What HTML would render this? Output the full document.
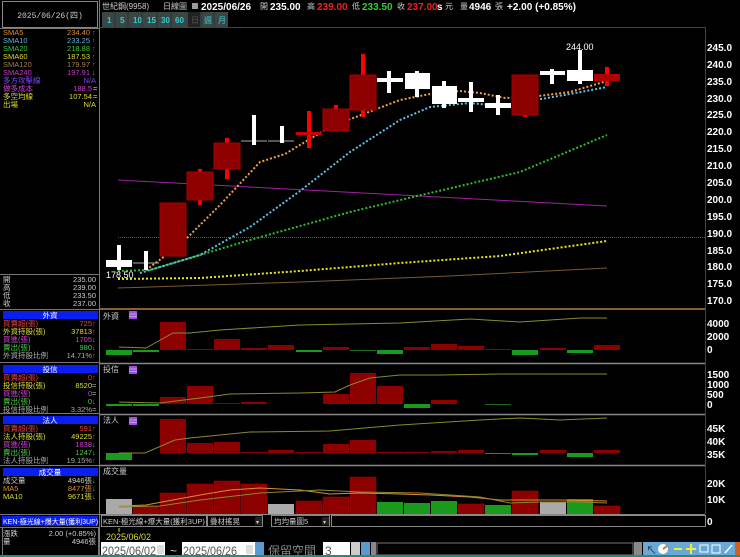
<!DOCTYPE html>
<html><head><meta charset="utf-8"><style>
html,body{margin:0;padding:0;background:#000;width:740px;height:557px;overflow:hidden}
svg{display:block}
text{font-family:"Liberation Sans","Noto Sans CJK TC",sans-serif}
.s{font-size:7.5px}
.m{font-family:"Liberation Mono","Noto Sans CJK TC",monospace}
.ax{font-size:10px;fill:#fff;font-weight:bold}
</style></head><body>
<svg width="740" height="557" viewBox="0 0 740 557" xmlns="http://www.w3.org/2000/svg">
<rect width="740" height="557" fill="#000"/>
<!-- LEFT PANEL -->
<rect x="2.5" y="1.5" width="95" height="26" fill="#000" stroke="#888"/>
<text x="50" y="18" fill="#ccc" font-size="8" text-anchor="middle" class="m">2025/06/26(四)</text>
<line x1="99.5" y1="0" x2="99.5" y2="557" stroke="#777"/>
<line x1="0" y1="28.5" x2="99" y2="28.5" stroke="#777"/>
<g class="s m" font-size="7.5">
<text x="3" y="35" fill="#e08a30">SMA5</text><text x="90" y="35" fill="#e08a30" text-anchor="end">234.40</text><text x="92" y="35" fill="#f22">↑</text>
<text x="3" y="43" fill="#5fb4d8">SMA10</text><text x="90" y="43" fill="#5fb4d8" text-anchor="end">233.25</text><text x="92" y="43" fill="#f22">↑</text>
<text x="3" y="51" fill="#3c3">SMA20</text><text x="90" y="51" fill="#3c3" text-anchor="end">218.88</text><text x="92" y="51" fill="#f22">↑</text>
<text x="3" y="59" fill="#dd3">SMA60</text><text x="90" y="59" fill="#dd3" text-anchor="end">187.53</text><text x="92" y="59" fill="#f22">↑</text>
<text x="3" y="67" fill="#a08050">SMA120</text><text x="90" y="67" fill="#a08050" text-anchor="end">179.97</text><text x="92" y="67" fill="#f22">↑</text>
<text x="3" y="75" fill="#c040c0">SMA240</text><text x="90" y="75" fill="#c040c0" text-anchor="end">197.91</text><text x="92" y="75" fill="#3c3">↓</text>
<text x="3" y="83" fill="#8040ff">多方攻擊線</text><text x="96" y="83" fill="#8040ff" text-anchor="end">N/A</text>
<text x="3" y="91" fill="#d040d0">做多成本</text><text x="92" y="91" fill="#d040d0" text-anchor="end">188.5</text><text x="93" y="91" fill="#ccc">=</text>
<text x="3" y="99" fill="#dd3">多空均線</text><text x="92" y="99" fill="#dd3" text-anchor="end">107.54</text><text x="93" y="99" fill="#ccc">=</text>
<text x="3" y="107" fill="#dd3">出場</text><text x="96" y="107" fill="#dd3" text-anchor="end">N/A</text>
<line x1="0" y1="274.5" x2="99" y2="274.5" stroke="#777"/>
<text x="3" y="282" fill="#ccc">開</text><text x="96" y="282" fill="#ccc" text-anchor="end">235.00</text>
<text x="3" y="290" fill="#ccc">高</text><text x="96" y="290" fill="#ccc" text-anchor="end">239.00</text>
<text x="3" y="298" fill="#ccc">低</text><text x="96" y="298" fill="#ccc" text-anchor="end">233.50</text>
<text x="3" y="306" fill="#ccc">收</text><text x="96" y="306" fill="#ccc" text-anchor="end">237.00</text>
<line x1="0" y1="309.5" x2="99" y2="309.5" stroke="#777"/>
<rect x="3" y="311" width="95" height="8" fill="#0a1ef0"/><text x="50" y="318" fill="#fff" text-anchor="middle">外資</text>
<text x="3" y="326" fill="#e04040">買賣超(張)</text><text x="92" y="326" fill="#e04040" text-anchor="end">725</text><text x="92" y="326" fill="#f22">↑</text>
<text x="3" y="334" fill="#dd3">外資持股(張)</text><text x="92" y="334" fill="#dd3" text-anchor="end">37813</text><text x="92" y="334" fill="#f22">↑</text>
<text x="3" y="342" fill="#d040d0">買進(張)</text><text x="92" y="342" fill="#d040d0" text-anchor="end">1705</text><text x="92" y="342" fill="#3c3">↓</text>
<text x="3" y="350" fill="#4c4">賣出(張)</text><text x="92" y="350" fill="#4c4" text-anchor="end">980</text><text x="92" y="350" fill="#3c3">↓</text>
<text x="3" y="358" fill="#aaa">外資持股比例</text><text x="92" y="358" fill="#aaa" text-anchor="end">14.71%</text><text x="92" y="358" fill="#f22">↑</text>
<line x1="0" y1="362.5" x2="99" y2="362.5" stroke="#777"/>
<rect x="3" y="365" width="95" height="8" fill="#0a1ef0"/><text x="50" y="372" fill="#fff" text-anchor="middle">投信</text>
<text x="3" y="380" fill="#e04040">買賣超(張)</text><text x="92" y="380" fill="#e04040" text-anchor="end">0</text><text x="92" y="380" fill="#f22">↑</text>
<text x="3" y="388" fill="#dd3">投信持股(張)</text><text x="92" y="388" fill="#dd3" text-anchor="end">8520</text><text x="92" y="388" fill="#aaa">=</text>
<text x="3" y="396" fill="#d040d0">買進(張)</text><text x="92" y="396" fill="#d040d0" text-anchor="end">0</text><text x="92" y="396" fill="#aaa">=</text>
<text x="3" y="404" fill="#4c4">賣出(張)</text><text x="92" y="404" fill="#4c4" text-anchor="end">0</text><text x="92" y="404" fill="#3c3">↓</text>
<text x="3" y="412" fill="#aaa">投信持股比例</text><text x="92" y="412" fill="#aaa" text-anchor="end">3.32%</text><text x="92" y="412" fill="#aaa">=</text>
<line x1="0" y1="413.5" x2="99" y2="413.5" stroke="#777"/>
<rect x="3" y="416" width="95" height="8" fill="#0a1ef0"/><text x="50" y="423" fill="#fff" text-anchor="middle">法人</text>
<text x="3" y="431" fill="#e04040">買賣超(張)</text><text x="92" y="431" fill="#e04040" text-anchor="end">591</text><text x="92" y="431" fill="#f22">↑</text>
<text x="3" y="439" fill="#dd3">法人持股(張)</text><text x="92" y="439" fill="#dd3" text-anchor="end">49225</text><text x="92" y="439" fill="#f22">↑</text>
<text x="3" y="447" fill="#d040d0">買進(張)</text><text x="92" y="447" fill="#d040d0" text-anchor="end">1838</text><text x="92" y="447" fill="#3c3">↓</text>
<text x="3" y="455" fill="#4c4">賣出(張)</text><text x="92" y="455" fill="#4c4" text-anchor="end">1247</text><text x="92" y="455" fill="#3c3">↓</text>
<text x="3" y="463" fill="#aaa">法人持股比例</text><text x="92" y="463" fill="#aaa" text-anchor="end">19.15%</text><text x="92" y="463" fill="#f22">↑</text>
<line x1="0" y1="465.5" x2="99" y2="465.5" stroke="#777"/>
<rect x="3" y="468" width="95" height="8" fill="#0a1ef0"/><text x="50" y="475" fill="#fff" text-anchor="middle">成交量</text>
<text x="3" y="483" fill="#ccc">成交量</text><text x="92" y="483" fill="#ccc" text-anchor="end">4946張</text><text x="92" y="483" fill="#3c3">↓</text>
<text x="3" y="491" fill="#e08a30">MA5</text><text x="92" y="491" fill="#e08a30" text-anchor="end">8477張</text><text x="92" y="491" fill="#3c3">↓</text>
<text x="3" y="499" fill="#dd3">MA10</text><text x="92" y="499" fill="#dd3" text-anchor="end">9671張</text><text x="92" y="499" fill="#3c3">↓</text>
<line x1="0" y1="514.5" x2="99" y2="514.5" stroke="#777"/>
<rect x="2" y="516" width="96" height="10" fill="#0a1ef0"/><text x="3" y="524" fill="#fff" font-size="7">KEN-極光線+爆大量(獲利3UP)</text>
<line x1="0" y1="527.5" x2="99" y2="527.5" stroke="#777"/>
<text x="3" y="536" fill="#ccc">漲跌</text><text x="96" y="536" fill="#ccc" text-anchor="end">2.00 (+0.85%)</text>
<text x="3" y="544" fill="#ccc">量</text><text x="96" y="544" fill="#ccc" text-anchor="end">4946張</text>
</g>
<rect x="2.5" y="527.5" width="96" height="28" fill="none" stroke="#777"/>

<!-- HEADER -->
<g font-size="8" class="m">
<text x="102" y="9" fill="#ccc">世紀鋼(9958)</text>
<text x="163" y="9" fill="#ccc">日線圖</text>
</g>
<rect x="192" y="3" width="6" height="6" fill="#999"/>
<g font-size="10" font-weight="bold">
<text x="201" y="10" fill="#fff">2025/06/26</text>
<text x="260" y="9" fill="#ccc" font-size="8" font-weight="normal">開</text>
<text x="270" y="10" fill="#fff">235.00</text>
<text x="307" y="9" fill="#ccc" font-size="8" font-weight="normal">高</text>
<text x="317" y="10" fill="#e22">239.00</text>
<text x="352" y="9" fill="#ccc" font-size="8" font-weight="normal">低</text>
<text x="362" y="10" fill="#3c3">233.50</text>
<text x="397" y="9" fill="#ccc" font-size="8" font-weight="normal">收</text>
<text x="407" y="10" fill="#e22">237.00</text>
<text x="437" y="10" fill="#fff">s</text>
<text x="445" y="9" fill="#ccc" font-size="8" font-weight="normal">元</text>
<text x="460" y="9" fill="#ccc" font-size="8" font-weight="normal">量</text>
<text x="469" y="10" fill="#fff">4946</text>
<text x="495" y="9" fill="#ccc" font-size="8" font-weight="normal">張</text>
<text x="507" y="10" fill="#fff">+2.00 (+0.85%)</text>
</g>
<g font-size="8" font-weight="bold" fill="#3cc">
<rect x="102" y="12" width="126" height="15" fill="#3a4646"/>
<text x="107" y="23">1</text><text x="120" y="23">5</text><text x="133" y="23">10</text><text x="147" y="23">15</text><text x="161" y="23">30</text><text x="175" y="23">60</text>
<rect x="188" y="12" width="12" height="15" fill="#222"/><text x="191" y="23" fill="#555" font-weight="normal">日</text>
<text x="204" y="23" font-weight="normal">週</text><text x="218" y="23" font-weight="normal">月</text>
<g stroke="#2a3333"><line x1="115" y1="12" x2="115" y2="27"/><line x1="128" y1="12" x2="128" y2="27"/><line x1="142" y1="12" x2="142" y2="27"/><line x1="157" y1="12" x2="157" y2="27"/><line x1="171" y1="12" x2="171" y2="27"/><line x1="201" y1="12" x2="201" y2="27"/><line x1="214" y1="12" x2="214" y2="27"/></g>
</g>

<!-- MAIN CHART FRAME -->
<line x1="100" y1="27.5" x2="705" y2="27.5" stroke="#603050"/>
<line x1="705.5" y1="27" x2="705.5" y2="514" stroke="#603050"/>
<line x1="100" y1="309" x2="705" y2="309" stroke="#8a6030" stroke-width="2"/>
<g class="ax">
<text x="707" y="51">245.0</text><text x="707" y="68">240.0</text><text x="707" y="85">235.0</text><text x="707" y="102">230.0</text><text x="707" y="118">225.0</text><text x="707" y="135">220.0</text><text x="707" y="152">215.0</text><text x="707" y="169">210.0</text><text x="707" y="186">205.0</text><text x="707" y="203">200.0</text><text x="707" y="220">195.0</text><text x="707" y="237">190.0</text><text x="707" y="254">185.0</text><text x="707" y="270">180.0</text><text x="707" y="287">175.0</text><text x="707" y="304">170.0</text>
</g>
<!-- MAs -->
<line x1="118" y1="180" x2="607" y2="206" stroke="#a020a0" stroke-width="1"/>
<line x1="118" y1="237.5" x2="705" y2="237.5" stroke="#a020a0" stroke-width="1" stroke-dasharray="1,1"/>
<polyline points="118,288 300,282 450,276 607,268" fill="none" stroke="#7a5a30" stroke-width="1"/>
<g fill="none" stroke-width="2" stroke-dasharray="2,2">
<polyline points="118,279 200,278 300,271 400,263 500,256 607,241" stroke="#e8e820"/>
<polyline points="118,271 150,270 250,240 350,212 430,193 520,172 607,135" stroke="#2ac02a"/>
<polyline points="140,273 200,255 250,227 300,191 350,152 400,120 430,107 470,103 500,106 530,101 570,94 607,87" stroke="#60c0e8"/>
<polyline points="146,270 180,245 220,205 260,162 285,154 330,127 400,100 430,94 460,91 480,93 505,98 530,97 570,92 607,81" stroke="#f0a040"/>
</g>
<!-- candles -->
<g>
<rect x="117" y="245" width="4" height="25" fill="#fff"/><rect x="106" y="260" width="26" height="7" fill="#fff"/>
<line x1="133" y1="263" x2="159" y2="263" stroke="#aaa"/><rect x="144" y="251" width="4" height="19" fill="#fff"/>
<rect x="160" y="203" width="26" height="53" fill="#8c0000" stroke="#a00"/>
<rect x="198" y="169" width="4" height="36" fill="#f00"/><rect x="187" y="172" width="26" height="28" fill="#8c0000" stroke="#a00"/>
<rect x="225" y="138" width="4" height="41" fill="#f00"/><rect x="214" y="143" width="26" height="26" fill="#8c0000" stroke="#a00"/>
<line x1="241" y1="141" x2="267" y2="141" stroke="#aaa"/><rect x="252" y="115" width="4" height="30" fill="#fff"/>
<line x1="268" y1="141" x2="294" y2="141" stroke="#aaa"/><rect x="280" y="126" width="4" height="17" fill="#fff"/>
<rect x="307" y="111" width="4" height="37" fill="#f00"/><rect x="296" y="132" width="26" height="3" fill="#c00"/>
<rect x="334" y="105" width="4" height="26" fill="#f00"/><rect x="323" y="109" width="26" height="22" fill="#8c0000" stroke="#a00"/>
<rect x="361" y="54" width="4" height="63" fill="#f00"/><rect x="350" y="75" width="26" height="35" fill="#8c0000" stroke="#a00"/>
<rect x="387" y="71" width="4" height="22" fill="#fff"/><rect x="377" y="78" width="26" height="4" fill="#fff"/>
<rect x="415" y="71" width="4" height="26" fill="#fff"/><rect x="405" y="73" width="25" height="16" fill="#fff"/>
<rect x="442" y="81" width="4" height="27" fill="#fff"/><rect x="432" y="86" width="25" height="18" fill="#fff"/>
<rect x="469" y="82" width="4" height="30" fill="#fff"/><rect x="458" y="98" width="26" height="4" fill="#fff"/>
<rect x="496" y="95" width="4" height="20" fill="#fff"/><rect x="485" y="103" width="26" height="5" fill="#fff"/>
<rect x="523" y="112" width="4" height="5" fill="#f00"/><rect x="512" y="75" width="26" height="40" fill="#8c0000" stroke="#a00"/>
<rect x="550" y="69" width="4" height="15" fill="#fff"/><rect x="540" y="71" width="25" height="4" fill="#fff"/>
<rect x="578" y="50" width="4" height="34" fill="#fff"/><rect x="567" y="70" width="26" height="11" fill="#fff"/>
<rect x="605" y="67" width="4" height="19" fill="#f00"/><rect x="594" y="74" width="26" height="7" fill="#b00000"/>
</g>
<text x="566" y="50" fill="#fff" font-size="9">244.00</text>
<text x="106" y="278" fill="#fff" font-size="9">178.50</text>

<!-- SUB PANELS separators -->
<g stroke="#888" stroke-width="1.5"><line x1="100" y1="363.5" x2="705" y2="363.5"/><line x1="100" y1="414.5" x2="705" y2="414.5"/><line x1="100" y1="465.5" x2="705" y2="465.5"/></g>
<g font-size="8" fill="#ccc"><text x="103" y="319">外資</text><text x="103" y="372">投信</text><text x="103" y="423">法人</text><text x="103" y="474">成交量</text></g>
<g fill="#a050e0"><rect x="129" y="311" width="8" height="8"/><rect x="129" y="366" width="8" height="8"/><rect x="129" y="417" width="8" height="8"/></g>
<g stroke="#d8b8f8" stroke-width=".7"><line x1="129" y1="314" x2="137" y2="314"/><line x1="129" y1="316.5" x2="137" y2="316.5"/><line x1="129" y1="369" x2="137" y2="369"/><line x1="129" y1="371.5" x2="137" y2="371.5"/><line x1="129" y1="420" x2="137" y2="420"/><line x1="129" y1="422.5" x2="137" y2="422.5"/></g>
<g class="ax" font-size="9">
<text x="707" y="327">4000</text><text x="707" y="340">2000</text><text x="707" y="353">0</text>
<text x="707" y="378">1500</text><text x="707" y="388">1000</text><text x="707" y="398">500</text><text x="707" y="408">0</text>
<text x="707" y="432">45K</text><text x="707" y="445">40K</text><text x="707" y="458">35K</text>
<text x="707" y="487">20K</text><text x="707" y="503">10K</text><text x="707" y="525">0</text>
</g>
<!-- panel1 -->
<g fill="#8c0000">
<rect x="106" y="350" width="26" height="5" fill="#1a9a1a"/><rect x="133" y="350" width="26" height="2" fill="#1a9a1a"/>
<rect x="160" y="322" width="26" height="28"/><rect x="187" y="349" width="26" height="1"/><rect x="214" y="339" width="26" height="11"/><rect x="241" y="348" width="26" height="2"/><rect x="268" y="345" width="26" height="5"/>
<rect x="296" y="350" width="26" height="2" fill="#1a9a1a"/><rect x="323" y="347" width="26" height="3"/><rect x="350" y="350" width="26" height="1" fill="#1a6a1a"/><rect x="377" y="350" width="26" height="4" fill="#1a9a1a"/><rect x="404" y="347" width="26" height="3"/>
<rect x="431" y="344" width="26" height="6"/><rect x="458" y="346" width="26" height="4"/><rect x="485" y="349" width="26" height="1"/><rect x="512" y="350" width="26" height="5" fill="#1a9a1a"/><rect x="540" y="348" width="26" height="2"/><rect x="567" y="350" width="26" height="3" fill="#1a9a1a"/><rect x="594" y="345" width="26" height="5"/>
</g>
<polyline points="119,347 146,348 173,333 190,333 220,330 300,325 400,323 470,319 520,322 580,318 607,318" fill="none" stroke="#8a8a30"/>
<!-- panel2 -->
<g fill="#8c0000">
<rect x="106" y="404" width="26" height="2" fill="#1a9a1a"/><rect x="133" y="404" width="26" height="2" fill="#1a9a1a"/>
<rect x="160" y="397" width="26" height="7"/><rect x="187" y="386" width="26" height="18"/><rect x="214" y="403" width="26" height="1"/><rect x="241" y="402" width="26" height="2"/>
<rect x="323" y="394" width="26" height="10"/><rect x="350" y="373" width="26" height="31"/><rect x="377" y="386" width="26" height="18"/><rect x="404" y="404" width="26" height="4" fill="#1a9a1a"/>
<rect x="431" y="400" width="26" height="4"/><rect x="485" y="404" width="26" height="1" fill="#1a6a1a"/>
</g>
<polyline points="119,402 160,403 200,398 230,394 300,393 335,392 350,385 370,378 400,375 440,375 500,374 607,374" fill="none" stroke="#8a8a30"/>
<!-- panel3 -->
<g fill="#8c0000">
<rect x="106" y="453" width="26" height="7" fill="#1a9a1a"/>
<rect x="160" y="419" width="26" height="34"/><rect x="187" y="443" width="26" height="10"/><rect x="214" y="442" width="26" height="11"/><rect x="241" y="452" width="26" height="1"/><rect x="268" y="450" width="26" height="3"/><rect x="296" y="452" width="26" height="1"/>
<rect x="323" y="444" width="26" height="9"/><rect x="350" y="440" width="26" height="13"/><rect x="377" y="452" width="26" height="1"/><rect x="404" y="452" width="26" height="1"/>
<rect x="431" y="451" width="26" height="2"/><rect x="458" y="450" width="26" height="3"/><rect x="485" y="453" width="26" height="1" fill="#1a9a1a"/><rect x="512" y="453" width="26" height="2" fill="#1a9a1a"/><rect x="540" y="450" width="26" height="3"/><rect x="567" y="453" width="26" height="4" fill="#1a9a1a"/><rect x="594" y="450" width="26" height="3"/>
</g>
<polyline points="119,453 145,453 175,440 190,438 250,432 330,431 400,425 480,420 520,418 560,420 607,418" fill="none" stroke="#8a8a30"/>
<!-- volume -->
<g fill="#8c0000" stroke="#a00" stroke-width=".5">
<rect x="106" y="499" width="26" height="15" fill="#aaa" stroke="none"/><rect x="133" y="506" width="26" height="8"/><rect x="160" y="493" width="26" height="21"/><rect x="187" y="484" width="26" height="30"/><rect x="214" y="481" width="26" height="33"/><rect x="241" y="484" width="26" height="30"/>
<rect x="268" y="504" width="26" height="10" fill="#aaa" stroke="none"/><rect x="296" y="501" width="26" height="13"/><rect x="323" y="497" width="26" height="17"/><rect x="350" y="477" width="26" height="37"/>
<rect x="377" y="502" width="26" height="12" fill="#1a9a1a" stroke="none"/><rect x="404" y="503" width="26" height="11" fill="#1a9a1a" stroke="none"/><rect x="431" y="501" width="26" height="13" fill="#1a9a1a" stroke="none"/><rect x="458" y="504" width="26" height="10"/><rect x="485" y="505" width="26" height="9" fill="#1a9a1a" stroke="none"/><rect x="512" y="491" width="26" height="23"/><rect x="540" y="502" width="26" height="12" fill="#aaa" stroke="none"/><rect x="567" y="499" width="26" height="15" fill="#1a9a1a" stroke="none"/><rect x="594" y="506" width="26" height="8"/>
</g>
<polyline points="119,506 146,505 173,500 200,495 230,490 260,488 300,490 330,494 360,493 400,494 430,495 470,497 500,500 530,500 560,500 607,501" fill="none" stroke="#e08a30"/>
<polyline points="119,507 160,506 200,500 260,493 320,490 360,492 420,493 480,497 510,503 540,502 580,502 607,503" fill="none" stroke="#8a8a30"/>
<!-- bottom rows -->
<line x1="100" y1="514.5" x2="705" y2="514.5" stroke="#888"/>
<g font-size="7.5" fill="#ccc">
<rect x="101.5" y="515.5" width="105" height="11" fill="#000" stroke="#888"/><text x="103" y="524">KEN-極光線+爆大量(獲利3UP)</text>
<rect x="207.5" y="515.5" width="55" height="11" fill="#000" stroke="#888"/><text x="210" y="524">疊材搖晃</text>
<rect x="255" y="517" width="7" height="8" fill="#222"/><text x="256" y="524" font-size="6">▾</text>
<rect x="271.5" y="515.5" width="58" height="11" fill="#000" stroke="#888"/><text x="274" y="524">均均量圖5</text>
<rect x="322" y="517" width="7" height="8" fill="#222"/><text x="323" y="524" font-size="6">▾</text>
<rect x="331.5" y="515.5" width="374" height="11" fill="#000" stroke="#888"/>
</g>
<line x1="119" y1="528" x2="119" y2="532" stroke="#dd3"/>
<text x="106" y="540" fill="#dd3" font-size="9">2025/06/02</text>
<!-- bottom bar -->
<rect x="100" y="542" width="640" height="15" fill="#000"/>
<g font-size="12" fill="#555">
<rect x="101" y="542" width="64" height="14" fill="#fff"/><text x="102" y="555" textLength="54" lengthAdjust="spacingAndGlyphs">2025/06/02</text>
<rect x="157" y="545" width="7" height="9" fill="#ddd"/>
<text x="170" y="555" fill="#ccc">~</text>
<rect x="182" y="542" width="73" height="14" fill="#fff"/><text x="183" y="555" textLength="54" lengthAdjust="spacingAndGlyphs">2025/06/26</text>
<rect x="246" y="545" width="7" height="9" fill="#ddd"/>
<rect x="255" y="542" width="9" height="14" fill="#5a9ad0"/>
<text x="268" y="555" fill="#888" font-size="12">保留空間</text>
<rect x="323" y="542" width="27" height="14" fill="#fff"/><text x="325" y="555">3</text>
<rect x="351" y="542" width="9" height="14" fill="#ccc"/>
<rect x="361" y="542" width="9" height="14" fill="#5a9ad0"/>
<rect x="371" y="542" width="5" height="14" fill="#888"/>
<rect x="377" y="543" width="256" height="12" fill="#000" stroke="#777"/>
<rect x="634" y="542" width="8" height="14" fill="#888"/>
</g>
<g>
<rect x="643" y="542" width="97" height="14" fill="#6aa8d8"/>
<text x="646" y="554" fill="#234" font-size="11">↖</text>
<circle cx="663" cy="549" r="5" fill="#fff"/><path d="M663 549 l4 -3" stroke="#e07020" stroke-width="2"/>
<rect x="674" y="548" width="8" height="2" fill="#ee3"/>
<rect x="686" y="548" width="10" height="2" fill="#ee3"/><rect x="690" y="544" width="2" height="10" fill="#ee3"/>
<rect x="700" y="545" width="8" height="7" fill="none" stroke="#fff"/>
<rect x="712" y="545" width="8" height="8" fill="none" stroke="#fff"/>
<path d="M725 553 l7 -8" stroke="#fff" stroke-width="1.5"/>
<rect x="735" y="542" width="5" height="14" fill="#d06020"/>
</g>
<rect x="0" y="555" width="740" height="2" fill="#2a8a78"/>
</svg>
</body></html>
